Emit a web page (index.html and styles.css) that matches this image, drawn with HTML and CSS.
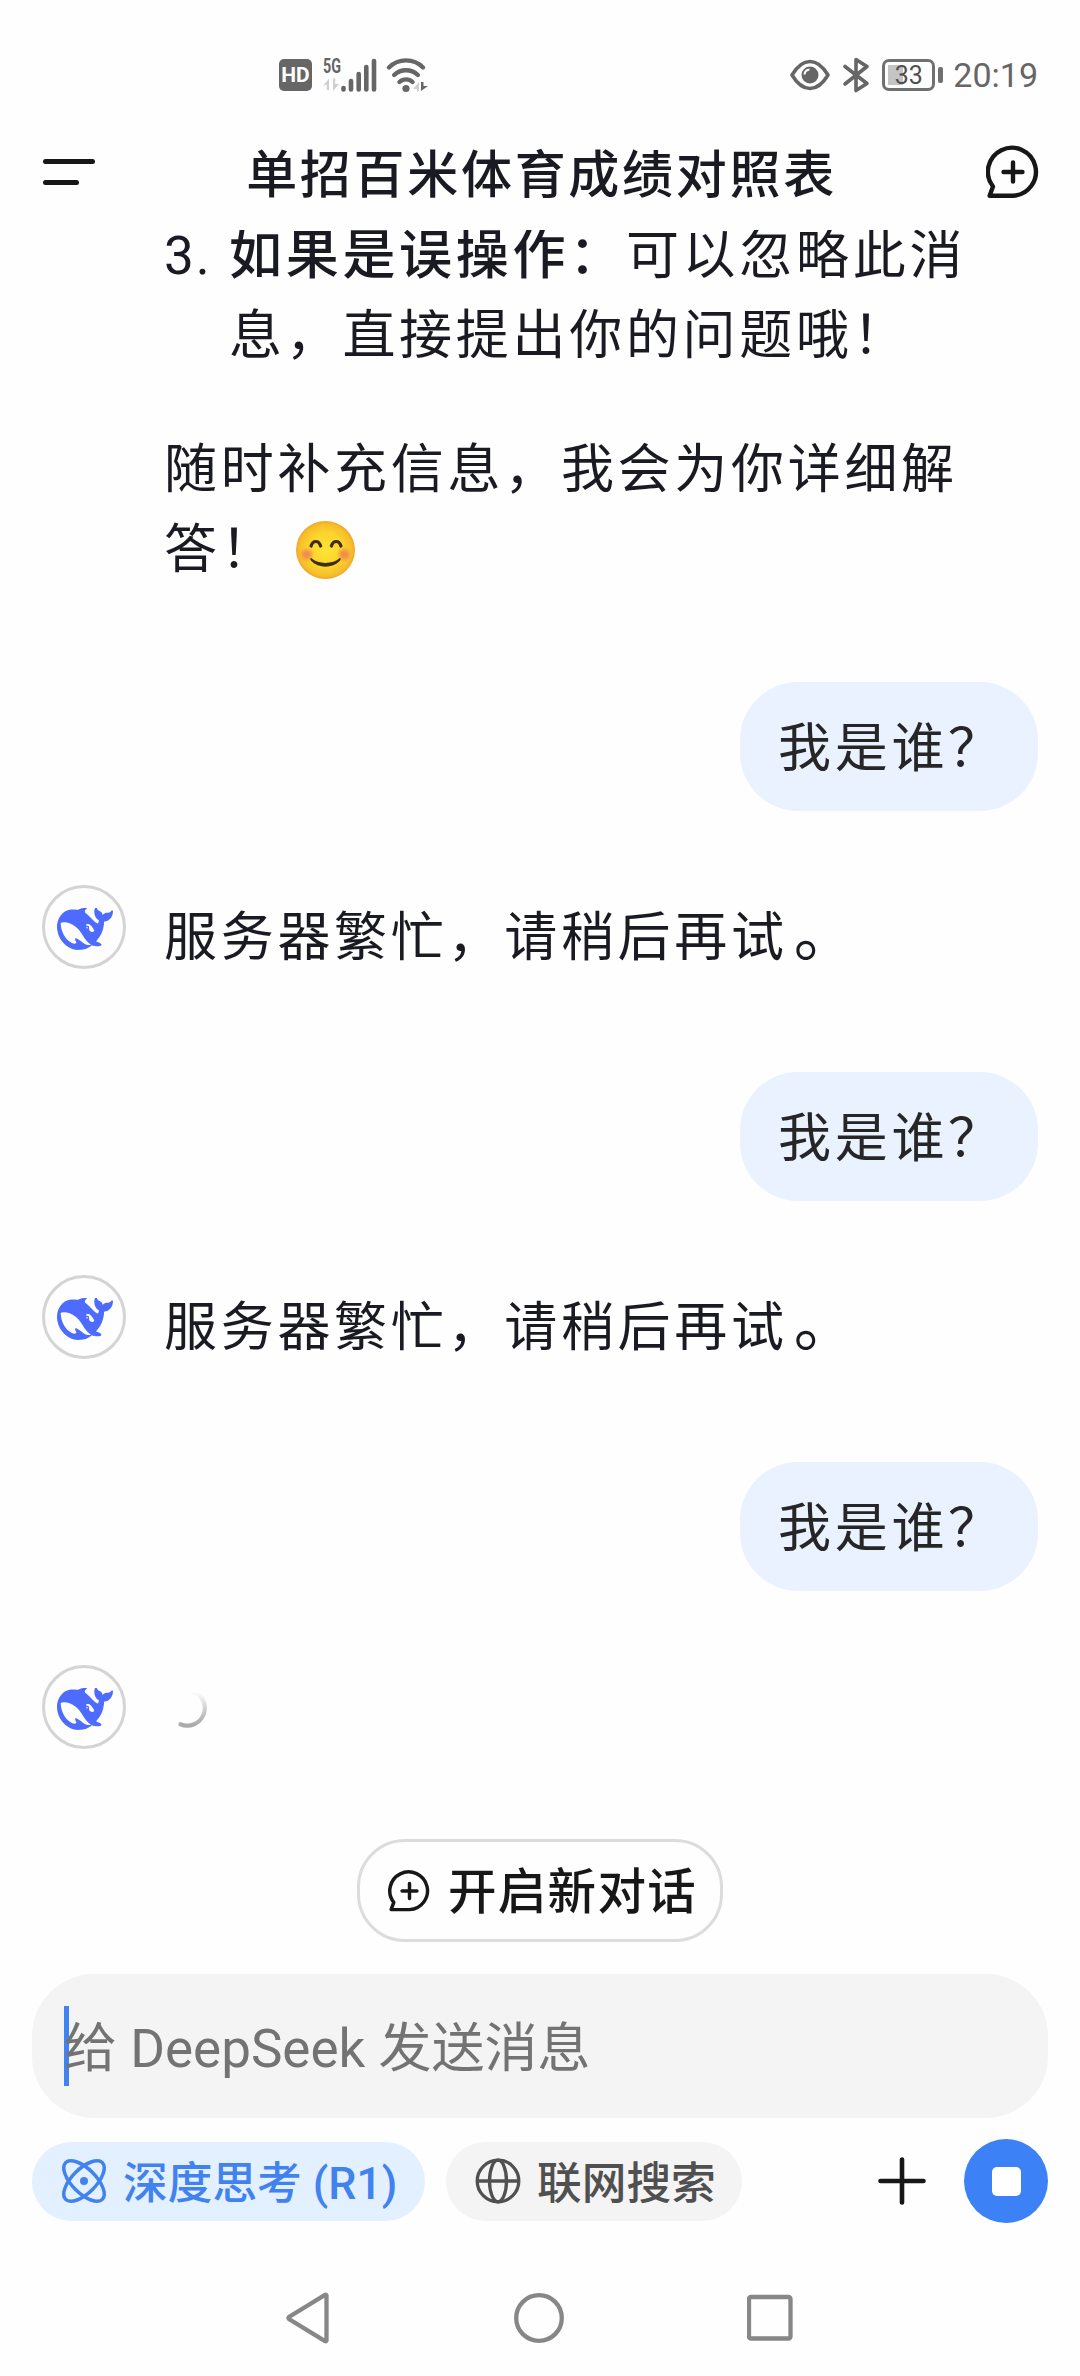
FILE: index.html
```html
<!DOCTYPE html>
<html lang="zh-CN">
<head>
<meta charset="utf-8">
<title>单招百米体育成绩对照表</title>
<link rel="stylesheet" href="styles.css">
</head>
<body>
<svg class="defs" width="0" height="0" aria-hidden="true">
  <symbol id="whale" viewBox="0 3.5 24 17.2" preserveAspectRatio="none">
    <path fill="#4d6bfe" d="M23.748 4.482c-.254-.124-.364.113-.512.234-.051.039-.094.09-.137.136-.372.397-.806.657-1.373.626-.829-.046-1.537.214-2.163.848-.133-.782-.575-1.248-1.247-1.548-.352-.156-.708-.311-.955-.65-.172-.241-.219-.51-.305-.774-.055-.16-.11-.323-.293-.35-.2-.031-.278.136-.356.276-.313.572-.434 1.202-.422 1.84.027 1.436.633 2.58 1.838 3.393.137.093.172.187.129.323-.082.28-.18.552-.266.833-.055.179-.137.217-.329.14a5.526 5.526 0 01-1.736-1.18c-.857-.828-1.631-1.742-2.597-2.458a11.365 11.365 0 00-.689-.471c-.985-.957.13-1.743.388-1.836.27-.098.093-.432-.779-.428-.872.004-1.67.295-2.687.684a3.055 3.055 0 01-.465.137 9.597 9.597 0 00-2.883-.102c-1.885.21-3.39 1.102-4.497 2.623C.082 8.606-.231 10.684.152 12.85c.403 2.284 1.569 4.175 3.36 5.653 1.858 1.533 3.997 2.284 6.438 2.14 1.482-.085 3.133-.284 4.994-1.86.47.234.962.327 1.78.397.63.059 1.236-.03 1.705-.128.735-.156.684-.837.419-.961-2.155-1.004-1.682-.595-2.113-.926 1.096-1.296 2.746-2.642 3.392-7.003.05-.347.007-.565 0-.845-.004-.17.035-.237.23-.256a4.173 4.173 0 001.545-.475c1.396-.763 1.96-2.015 2.093-3.517.02-.23-.004-.467-.247-.588zM11.581 18c-2.089-1.642-3.102-2.183-3.52-2.16-.392.024-.321.471-.235.763.09.288.207.486.371.739.114.167.192.416-.113.603-.673.416-1.842-.14-1.897-.167-1.361-.802-2.5-1.86-3.301-3.307-.774-1.393-1.224-2.887-1.298-4.482-.02-.386.093-.522.477-.592a4.696 4.696 0 011.529-.039c2.132.312 3.946 1.265 5.468 2.774.868.86 1.525 1.887 2.202 2.891.72 1.066 1.494 2.082 2.48 2.914.348.292.625.514.891.677-.802.09-2.14.11-3.054-.614zm1-6.44a.306.306 0 01.415-.287.302.302 0 01.2.288.306.306 0 01-.31.307.303.303 0 01-.304-.308zm3.11 1.596c-.2.081-.399.151-.59.16a1.245 1.245 0 01-.798-.254c-.274-.23-.47-.358-.552-.758a1.73 1.73 0 01.016-.588c.07-.327-.008-.537-.239-.727-.187-.156-.426-.199-.688-.199a.559.559 0 01-.254-.078c-.11-.054-.2-.19-.114-.358.028-.054.16-.186.192-.21.356-.202.767-.136 1.146.016.352.144.618.408 1.001.782.391.451.462.576.685.914.176.265.336.537.445.848.067.195-.019.354-.25.452z"/>
  </symbol>
  <symbol id="chat-plus" viewBox="0 0 54 56">
    <path d="M27 51.7H3.6L7 42.5A24 24 0 1 1 27 51.7Z M27 18.5V37.500M17.500 28H36.500" fill="none" stroke="#171717" stroke-width="4.400" stroke-linecap="round" stroke-linejoin="round"/>
  </symbol>
</svg>

<header class="status-bar">
  <div class="status-left">
    <span class="hd">HD</span>
    <svg class="signal" width="54" height="36" viewBox="0 0 54 36">
      <text x="0" y="15.500" class="net" textLength="18" lengthAdjust="spacingAndGlyphs">5G</text>
      <path d="M0 29L6 21.500V33H3.800V27.500ZM16 27L10 34V21.500H12.200V27Z" fill="#cfcfcf"/>
      <path d="M20.500 32.500V31M28 32.500V24M35.700 32.500V17M43.300 32.500V10M51 32.500V4" stroke="#666" stroke-width="4.600" stroke-linecap="round"/>
    </svg>
    <svg class="wifi" width="42" height="36" viewBox="0 0 42 36">
      <path d="M3 10.500A24 24 0 0 1 37 10.500M8.200 18A17 17 0 0 1 31.800 18M13.500 25A9.500 9.500 0 0 1 26.500 25" fill="none" stroke="#666" stroke-width="4.300" stroke-linecap="round"/>
      <circle cx="20" cy="31.500" r="3.600" fill="#666"/>
      <path d="M27 32L33 25V34H31V32Z" fill="#cfcfcf"/><path d="M35 25V34L42 29H37.500V25Z" fill="#666"/>
    </svg>
  </div>
  <div class="status-right">
    <svg width="40" height="36" viewBox="0 0 40 36">
      <path d="M2 18C8 8 14 4.500 20 4.500S32 8 38 18C32 28 26 31.500 20 31.500S8 28 2 18Z" fill="none" stroke="#666" stroke-width="3.600" stroke-linejoin="round"/>
      <circle cx="20" cy="18" r="8.500" fill="#666"/><path d="M14.500 17.500A5.500 5.500 0 0 1 19.500 12.500" fill="none" stroke="#fff" stroke-width="2"/>
    </svg>
    <svg width="28" height="36" viewBox="0 0 28 36">
      <path d="M3 9.500L25 26.500L14 33.500V2.500L25 9.500L3 27" fill="none" stroke="#666" stroke-width="3.600" stroke-linejoin="round" stroke-linecap="round"/>
    </svg>
    <div class="battery"><span class="battery-body">33</span><span class="battery-tip"></span></div>
    <span class="clock">20:19</span>
  </div>
</header>

<nav class="title-bar">
  <span class="menu"><i></i><i></i></span>
  <h1>单招百米体育成绩对照表</h1>
  <svg class="new-icon" width="54" height="56"><use href="#chat-plus"/></svg>
</nav>

<main class="chat">
  <section class="answer">
    <ol start="3"><li><span class="num">3.</span><p><b>如果是误操作：</b>可以忽略此消息，直接提出你的问题哦！</p></li></ol>
    <p>随时补充信息，我会为你详细解答！<svg class="emoji" width="61" height="60" viewBox="0 0 60 60" preserveAspectRatio="none" role="img" aria-label="微笑">
      <defs>
        <radialGradient id="face"><stop offset="0" stop-color="#fee433"/><stop offset=".6" stop-color="#fbd42c"/><stop offset=".9" stop-color="#f7bd2b"/><stop offset="1" stop-color="#eda62c"/></radialGradient>
        <radialGradient id="cheek"><stop offset="0" stop-color="#f08554"/><stop offset=".4" stop-color="#f18c50" stop-opacity=".85"/><stop offset="1" stop-color="#f6a040" stop-opacity="0"/></radialGradient>
      </defs>
      <circle cx="30" cy="30" r="29" fill="url(#face)"/>
      <circle cx="11.500" cy="34.500" r="8" fill="url(#cheek)"/><circle cx="48.500" cy="34.500" r="8" fill="url(#cheek)"/>
      <path d="M15.800 26C17.500 20 23.500 20 25.200 26M35.800 26C37.500 20 43.500 20 45.200 26" fill="none" stroke="#422b0d" stroke-width="3.200" stroke-linecap="round"/>
      <path d="M16 38C23 44.500 37 44.500 44 38C45.500 38 45 40 44 41C37 48.500 23 48.500 16 41C15 40 14.500 38 16 38Z" fill="#422b0d"/>
    </svg></p>
  </section>

  <div class="turn">
    <div class="bubble">我是谁？</div>
    <div class="reply"><span class="avatar"><svg width="56" height="42"><use href="#whale"/></svg></span><p>服务器繁忙，请稍后再试<span class="stop-mark">。</span></p></div>
  </div>
  <div class="turn">
    <div class="bubble">我是谁？</div>
    <div class="reply"><span class="avatar"><svg width="56" height="42"><use href="#whale"/></svg></span><p>服务器繁忙，请稍后再试<span class="stop-mark">。</span></p></div>
  </div>
  <div class="turn">
    <div class="bubble">我是谁？</div>
    <div class="reply"><span class="avatar"><svg width="56" height="42"><use href="#whale"/></svg></span>
      <svg class="spinner" width="44" height="44" viewBox="0 0 44 44">
        <defs><linearGradient id="fade" x1="0" y1="1" x2="0" y2="0"><stop offset="0" stop-color="#aaa"/><stop offset=".5" stop-color="#d0d0d0"/><stop offset="1" stop-color="#fff"/></linearGradient></defs>
        <path d="M14.500 37.300A17.500 17.500 0 0 0 28 4.800" fill="none" stroke="url(#fade)" stroke-width="4.200" stroke-linecap="round"/>
      </svg>
    </div>
  </div>
</main>

<footer class="composer">
  <button class="new-chat"><svg width="43" height="44"><use href="#chat-plus"/></svg><span>开启新对话</span></button>
  <div class="input"><i class="caret"></i><span>给 DeepSeek 发送消息</span></div>
  <div class="tools">
    <span class="chip chip-on">
      <svg width="46" height="46" viewBox="0 0 46 46" fill="none" stroke="#4182ee" stroke-width="3.500">
        <ellipse cx="23" cy="23" rx="26" ry="12" transform="rotate(45 23 23)"/><ellipse cx="23" cy="23" rx="26" ry="12" transform="rotate(-45 23 23)"/>
        <circle cx="23" cy="23" r="4" fill="#4182ee" stroke="none"/>
      </svg><span>深度思考 (R1)</span></span>
    <span class="chip">
      <svg width="46" height="46" viewBox="0 0 46 46" fill="none" stroke="#505050" stroke-width="3.300">
        <circle cx="23" cy="23" r="20.800"/><ellipse cx="23" cy="23" rx="8.500" ry="20.800"/><path d="M2 23H44"/>
      </svg><span>联网搜索</span></span>
    <svg class="plus" width="48" height="48" viewBox="0 0 48 48"><path d="M24 2.500V45.500M2.500 24H45.500" stroke="#171717" stroke-width="4.600" stroke-linecap="round"/></svg>
    <button class="stop"><i></i></button>
  </div>
</footer>

<div class="system-nav">
  <svg width="44" height="52" viewBox="0 0 44 52"><path d="M40.500 3.500V48.500Q40 49.500 39 49L3 27Q2 26 3 25L39 3Q40 2.500 40.500 3.500Z"/></svg>
  <svg width="52" height="52" viewBox="0 0 52 52"><circle cx="26" cy="26" r="22.800"/></svg>
  <svg width="46" height="52" viewBox="0 0 46 52"><rect x="2" y="5" width="41.500" height="41.500" rx="2"/></svg>
</div>
</body>
</html>
```
FILE: styles.css
```css
* { box-sizing: border-box; margin: 0; padding: 0; }

body {
  width: 1080px;
  height: 2376px;
  overflow: hidden;
  display: flex;
  flex-direction: column;
  background: #fefefe;
  color: #1a1b22;
  font-family: Roboto, "Noto Sans CJK SC", sans-serif;
}

svg { display: block; flex: none; }
.defs { position: absolute; }
button { border: 0; background: none; font: inherit; color: inherit; }

/* status bar */
.status-bar {
  height: 130px;
  padding: 57px 42px 0 279px;
  display: flex;
  justify-content: space-between;
  align-items: flex-start;
  color: #666;
}
.status-left, .status-right { display: flex; align-items: center; height: 36px; }
.hd {
  width: 33px; height: 32px;
  border-radius: 5px;
  background: #666; color: #fff;
  font: 700 21px/33px Roboto, sans-serif;
  text-align: center;
}
.signal { margin-left: 11px; }
.net { font: 700 20px "Roboto", sans-serif; fill: #666; }
.wifi { margin-left: 9px; }
.status-right { gap: 12px; }
.battery { display: flex; align-items: center; gap: 3px; }
.battery-body {
  width: 53px; height: 32px;
  border: 3px solid #707070;
  border-radius: 7px;
  background: linear-gradient(#c4c4c4, #c4c4c4) 3px 3px / 15px 20px no-repeat;
  color: #505050;
  font: 400 25px/27px Roboto, sans-serif;
  text-align: center;
}
.battery-tip { width: 5px; height: 16px; border-radius: 2px; background: #707070; }
.clock { font-size: 34px; line-height: 36px; margin-left: -2px; }

/* title bar */
.title-bar {
  height: 100px;
  flex: none;
  padding: 0 40px 0 43px;
  display: flex;
  justify-content: space-between;
  align-items: flex-start;
}
.menu { display: flex; flex-direction: column; gap: 16px; padding-top: 29px; width: 54px; }
.menu i { display: block; width: 52px; height: 5px; border-radius: 3px; background: #171717; }
.menu i + i { width: 36px; }
h1 { font-size: 51px; font-weight: 500; letter-spacing: 2.7px; line-height: 84px; padding-top: 4px; }
.new-icon { margin-top: 14px; }

/* conversation */
.chat {
  flex: 1;
  min-height: 0;
  overflow: hidden;
  padding: 0 42px;
  font-size: 53px;
  letter-spacing: 3.7px;
  line-height: 80.3px;
}
.answer { margin: -14px 0 0 122px; width: 808px; height: 466px; }
.answer li { display: flex; margin-bottom: 53.500px; list-style: none; }
.num { width: 65px; letter-spacing: 2px; flex: none; }
b { font-weight: 500; }
.emoji { display: inline-block; vertical-align: -12px; margin-left: 18px; }

.turn { height: 390px; display: flex; flex-direction: column; }
.bubble {
  align-self: flex-end;
  width: 298px; height: 129px;
  padding: 27px 0 0 38px;
  border-radius: 58px;
  background: #eaf2ff;
  color: #262626;
}
.reply { display: flex; margin-top: 74px; height: 84px; align-items: center; }
.reply p { margin-left: 38px; padding-top: 23px; }
.stop-mark { margin-left: 6px; font-size: 62px; line-height: 0; }
.avatar {
  width: 84px; height: 84px;
  border: 3px solid #d4d4d4;
  border-radius: 50%;
  display: flex; align-items: center; justify-content: center;
}
.avatar svg { margin: 4px 0 0 2px; }
.spinner { margin: 4px 0 0 40px; }

/* composer */
.composer { flex: none; padding: 0 32px; display: flex; flex-direction: column; align-items: center; }
.new-chat {
  width: 366px; height: 103px;
  border: 3px solid #dcdcdc;
  border-radius: 48px;
  display: flex; align-items: center;
  padding-left: 28px; gap: 17px;
  color: #171717;
  font-size: 48.500px; font-weight: 500; letter-spacing: 1.300px; line-height: 80px;
}
.new-chat span { padding-top: 5px; }
.input {
  align-self: stretch;
  margin-top: 32px;
  height: 144px;
  padding-left: 32px;
  border-radius: 62px;
  background: #f4f4f4;
  display: flex; align-items: center;
  color: #737373;
  font-size: 53px;
  line-height: 80px;
}
.caret { width: 5px; height: 80px; margin-right: -5px; background: #4083f0; }
.input span { padding-top: 5px; }
.tools { align-self: stretch; display: flex; align-items: center; margin-top: 21px; height: 84px; }
.chip {
  height: 79px;
  width: 296px;
  padding-left: 29px;
  border-radius: 40px;
  background: #f4f4f4;
  color: #505050;
  display: flex; align-items: center; gap: 16px;
  font-size: 44.700px; font-weight: 500; line-height: 60px;
  white-space: nowrap;
}
.chip span { padding-top: 5px; }
.chip-on { width: 393px; margin-right: 21px; background: #e3f0ff; color: #4182ee; }
.plus { margin-left: auto; }
.stop {
  width: 84px; height: 84px;
  margin-left: 38px;
  border-radius: 50%;
  background: #3c82f6;
  display: flex; align-items: center; justify-content: center;
}
.stop i { width: 29px; height: 29px; border-radius: 5px; background: #fff; }

.system-nav {
  height: 153px;
  flex: none;
  padding: 69px 287px 0 286px;
  display: flex;
  justify-content: space-between;
}
.system-nav svg { fill: none; stroke: #878787; stroke-width: 4.300px; }
```
